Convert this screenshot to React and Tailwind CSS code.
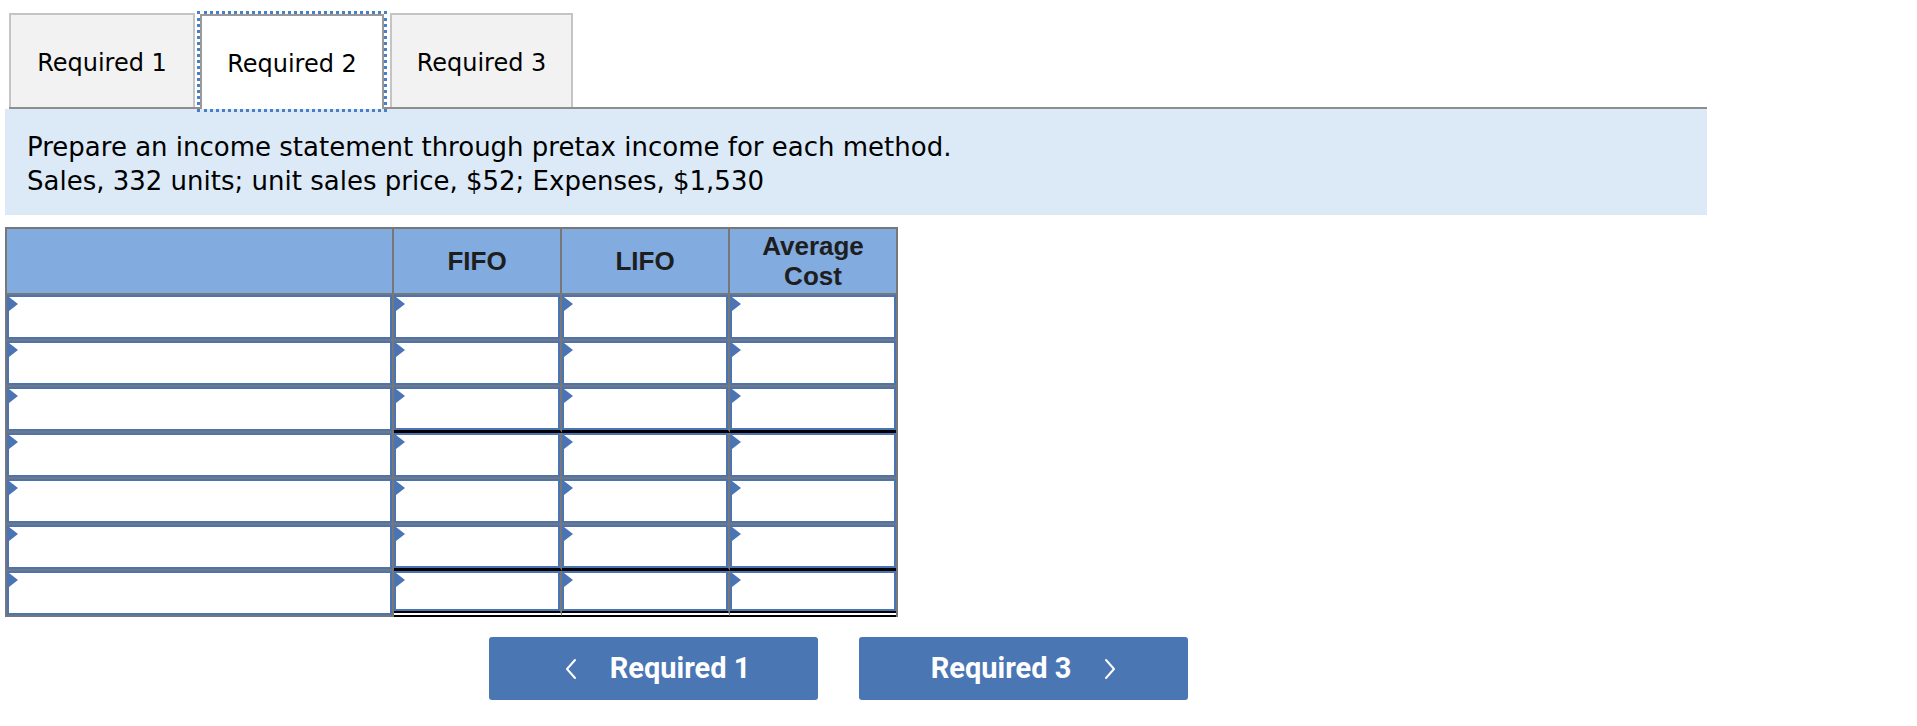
import React from "react";

const Tri = () => (
  <svg className="absolute left-0 top-0" width="10" height="14" viewBox="0 0 10 14">
    <polygon points="0,0 9,7 0,14" fill="#4a74b4" />
  </svg>
);

const Cell = ({ w, last, bottom }) => (
  <div className={`${w} ${last ? "" : "border-r-2 border-r-[#777777]"} ${bottom} h-full`}>
    <div className="relative h-full w-full border-2 border-[#4a74b4] bg-white">
      <Tri />
    </div>
  </div>
);

const rows = [0, 1, 2, 3, 4, 5, 6];

function bottomFor(r, col) {
  if (col === 0) {
    return "border-b-2 border-b-[#777777]";
  }
  if (r === 2 || r === 5) return "border-b-[3px] border-b-black";
  if (r === 6) return "border-b-[6px] border-double border-b-black";
  return "border-b-2 border-b-[#777777]";
}

const Chevron = ({ dir }) => (
  <svg width="12" height="22" viewBox="0 0 12 22" fill="none">
    {dir === "left" ? (
      <polyline points="10,2 2,11 10,20" stroke="white" strokeWidth="2" strokeLinejoin="round" strokeLinecap="round" />
    ) : (
      <polyline points="2,2 10,11 2,20" stroke="white" strokeWidth="2" strokeLinejoin="round" strokeLinecap="round" />
    )}
  </svg>
);

export default function App() {
  return (
    <div className="min-h-[726px] bg-white pl-[5px] pt-[13px] font-['DejaVu_Sans',sans-serif] text-black">
      {/* Tabs */}
      <div className="ml-[4px] flex w-[1698px] items-end gap-[5px] border-b-2 border-[#8e8e8e]">
        <div className="flex h-[94px] w-[186px] items-center justify-center border-2 border-b-0 border-[#c4c4c4] bg-[#f2f2f2] pt-[4px] text-[24px]">
          Required 1
        </div>
        <div className="relative z-10 -mb-[2px] flex h-[95px] w-[184px] items-center justify-center border-2 border-b-0 border-[#999999] bg-white pt-[2px] text-[24px] outline-dotted outline-[3px] outline-offset-[0px] outline-[#4a7fc8]">
          Required 2
        </div>
        <div className="ml-[1px] flex h-[94px] w-[183px] items-center justify-center border-2 border-b-0 border-[#c4c4c4] bg-[#f2f2f2] pt-[4px] text-[24px]">
          Required 3
        </div>
      </div>

      {/* Instructions */}
      <div className="h-[106px] w-[1702px] bg-[#dceaf7] pl-[22px] pt-[21px] text-[26px] leading-[34px]">
        <div>Prepare an income statement through pretax income for each method.</div>
        <div>Sales, 332 units; unit sales price, $52; Expenses, $1,530</div>
      </div>

      {/* Table */}
      <div className="mt-[12px] w-[893px] border-x-2 border-t-2 border-[#777777] font-['Liberation_Sans',sans-serif]">
        <div className="flex h-[66px] border-b-2 border-[#777777] bg-[#82abdf] text-[26px] font-bold leading-[30px] text-[#1e1e1e]">
          <div className="w-[387px] border-r-2 border-[#777777]"></div>
          <div className="flex w-[168px] items-center justify-center border-r-2 border-[#777777]">FIFO</div>
          <div className="flex w-[168px] items-center justify-center border-r-2 border-[#777777]">LIFO</div>
          <div className="flex w-[166px] items-center justify-center text-center">
            Average
            <br />
            Cost
          </div>
        </div>
        {rows.map((r) => (
          <div key={r} className="flex h-[46px]">
            <Cell w="w-[387px]" bottom={bottomFor(r, 0)} />
            <Cell w="w-[168px]" bottom={bottomFor(r, 1)} />
            <Cell w="w-[168px]" bottom={bottomFor(r, 2)} />
            <Cell w="w-[166px]" last bottom={bottomFor(r, 3)} />
          </div>
        ))}
      </div>

      {/* Buttons */}
      <div className="ml-[484px] mt-[20px] flex gap-[41px] font-['Roboto',sans-serif] text-[29px] font-bold text-white">
        <button className="flex h-[63px] w-[329px] items-center justify-center gap-[33px] rounded-[3px] bg-[#4a76b4] pl-[8px]">
          <Chevron dir="left" />
          <span>Required 1</span>
        </button>
        <button className="flex h-[63px] w-[329px] items-center justify-center gap-[33px] rounded-[3px] bg-[#4a76b4]">
          <span>Required 3</span>
          <Chevron dir="right" />
        </button>
      </div>
    </div>
  );
}
